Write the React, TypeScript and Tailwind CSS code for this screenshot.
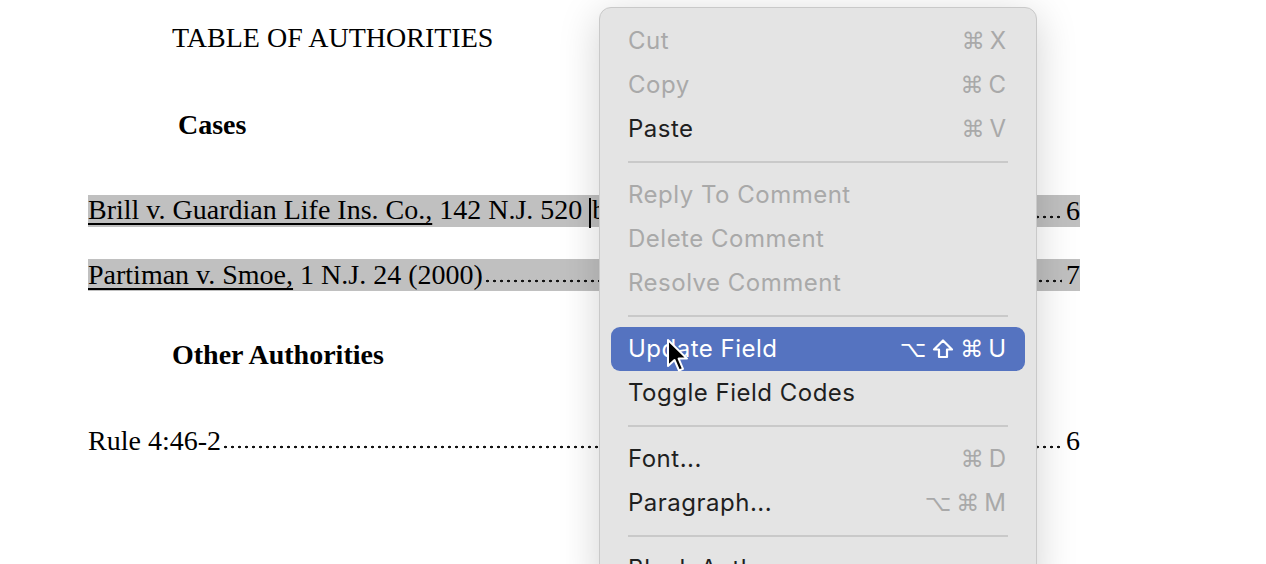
const serif = "font-['Liberation_Serif','Times_New_Roman',serif]";

// dot leader drawn as a repeating dot pattern on the baseline
const dots =
  "min-w-0 flex-1 self-stretch bg-[radial-gradient(circle,#111_1.1px,transparent_1.6px)] bg-[length:7px_4px] bg-[position:1px_20px] bg-repeat-x";

function Leader({
  name,
  rest,
  page,
  caret,
}: {
  name: string;
  rest: string;
  page: string;
  caret?: boolean;
}) {
  return (
    <div className="flex h-8 w-[992px] items-center bg-[#c0c0c0] text-[28px] leading-8 text-black">
      <span className="shrink-0 whitespace-nowrap">
        <span className="underline decoration-[1.5px] underline-offset-[4px]">{name}</span>
        {rest}
        {caret && <span className="mr-[1px] inline-block h-[30px] w-[2px] align-middle bg-black" />}
        {caret && "b"}
      </span>
      <span className={dots} />
      <span className="shrink-0 pl-[4px]">{page}</span>
    </div>
  );
}

type Item = { label: string; keys?: string; disabled?: boolean; active?: boolean };

const GROUPS: Item[][] = [
  [
    { label: "Cut", keys: "⌘X", disabled: true },
    { label: "Copy", keys: "⌘C", disabled: true },
    { label: "Paste", keys: "⌘V" },
  ],
  [
    { label: "Reply To Comment", disabled: true },
    { label: "Delete Comment", disabled: true },
    { label: "Resolve Comment", disabled: true },
  ],
  [
    { label: "Update Field", keys: "⌥⇧⌘U", active: true },
    { label: "Toggle Field Codes" },
  ],
  [
    { label: "Font...", keys: "⌘D" },
    { label: "Paragraph...", keys: "⌥⌘M" },
  ],
  [{ label: "Block Authors..." }],
];

function ShiftGlyph() {
  return (
    <svg width="22" height="22" viewBox="0 0 22 22" className="mx-[1px]">
      <path
        d="M11 2.5 L20 11.5 L15 11.5 L15 19 L7 19 L7 11.5 L2 11.5 Z"
        fill="none"
        stroke="currentColor"
        strokeWidth="2.2"
        strokeLinejoin="round"
      />
    </svg>
  );
}

function MenuRow({ item }: { item: Item }) {
  const text = item.active ? "text-white" : item.disabled ? "text-[#a9a9a9]" : "text-[#1f1f1f]";
  const keyText = item.active ? "text-white" : "text-[#a9a9a9]";
  return (
    <div
      className={`mx-[11px] flex h-[44px] items-center justify-between rounded-[9px] pl-[17px] pr-[19px] ${
        item.active ? "bg-[#5573c0]" : ""
      }`}
    >
      <span className={`text-[24px] tracking-[0.5px] ${text}`}>{item.label}</span>
      {item.keys && (
        <span className={`flex items-center gap-[5px] text-[24px] ${keyText}`}>
          {item.keys.split("").map((k, i) =>
            k === "⇧" ? (
              <ShiftGlyph key={i} />
            ) : (
              <span
                key={i}
                className={
                  "⌘⌥".includes(k)
                    ? "font-['DejaVu_Sans',sans-serif] text-[23px]"
                    : "font-['Inter',sans-serif]"
                }
              >
                {k}
              </span>
            )
          )}
        </span>
      )}
    </div>
  );
}

function Cursor() {
  return (
    <svg
      className="absolute left-[666px] top-[338px]"
      width="24"
      height="36"
      viewBox="0 0 24 36"
    >
      <path
        d="M2 2 L2 28 L8.5 22 L13 32.5 L17 30.8 L12.6 20.6 L21 20.6 Z"
        fill="#000"
        stroke="#fff"
        strokeWidth="2"
        strokeLinejoin="round"
      />
    </svg>
  );
}

export default function App() {
  return (
    <div className="relative h-[564px] w-[1266px] overflow-hidden bg-white">
      {/* document */}
      <div className={`flex flex-col pl-[88px] pt-[22px] ${serif}`}>
        <div className="h-8 pl-[84px] text-[28px] leading-8 text-black">TABLE OF AUTHORITIES</div>
        <div className="mt-[55px] h-8 pl-[90px] text-[28px] font-bold leading-8 text-black">Cases</div>
        <div className="mt-[54px]">
          <Leader name="Brill v. Guardian Life Ins. Co.," rest=" 142 N.J. 520 " page="6" caret />
        </div>
        <div className="mt-[32px]">
          <Leader name="Partiman v. Smoe," rest=" 1 N.J. 24 (2000)" page="7" />
        </div>
        <div className="mt-[48px] h-8 pl-[84px] text-[28px] font-bold leading-8 text-black">
          Other Authorities
        </div>
        <div className="mt-[54px] flex h-8 w-[992px] items-center text-[28px] leading-8 text-black">
          <span className="shrink-0">Rule 4:46-2</span>
          <span className={dots} />
          <span className="shrink-0 pl-[4px]">6</span>
        </div>
      </div>

      {/* context menu */}
      <div className="absolute left-[599px] top-[7px] w-[438px] rounded-[12px] border border-[#c9c9c9] bg-[#e4e4e4] pt-[11px] shadow-[0_8px_40px_rgba(0,0,0,0.18)] font-['Inter',sans-serif]">
        {GROUPS.map((g, gi) => (
          <div key={gi}>
            {gi > 0 && (
              <div className="flex h-[22px] items-center px-[28px]">
                <div className="h-[2px] w-full bg-[#c9c9c9]" />
              </div>
            )}
            {g.map((item) => (
              <MenuRow key={item.label} item={item} />
            ))}
          </div>
        ))}
      </div>

      <Cursor />
    </div>
  );
}
